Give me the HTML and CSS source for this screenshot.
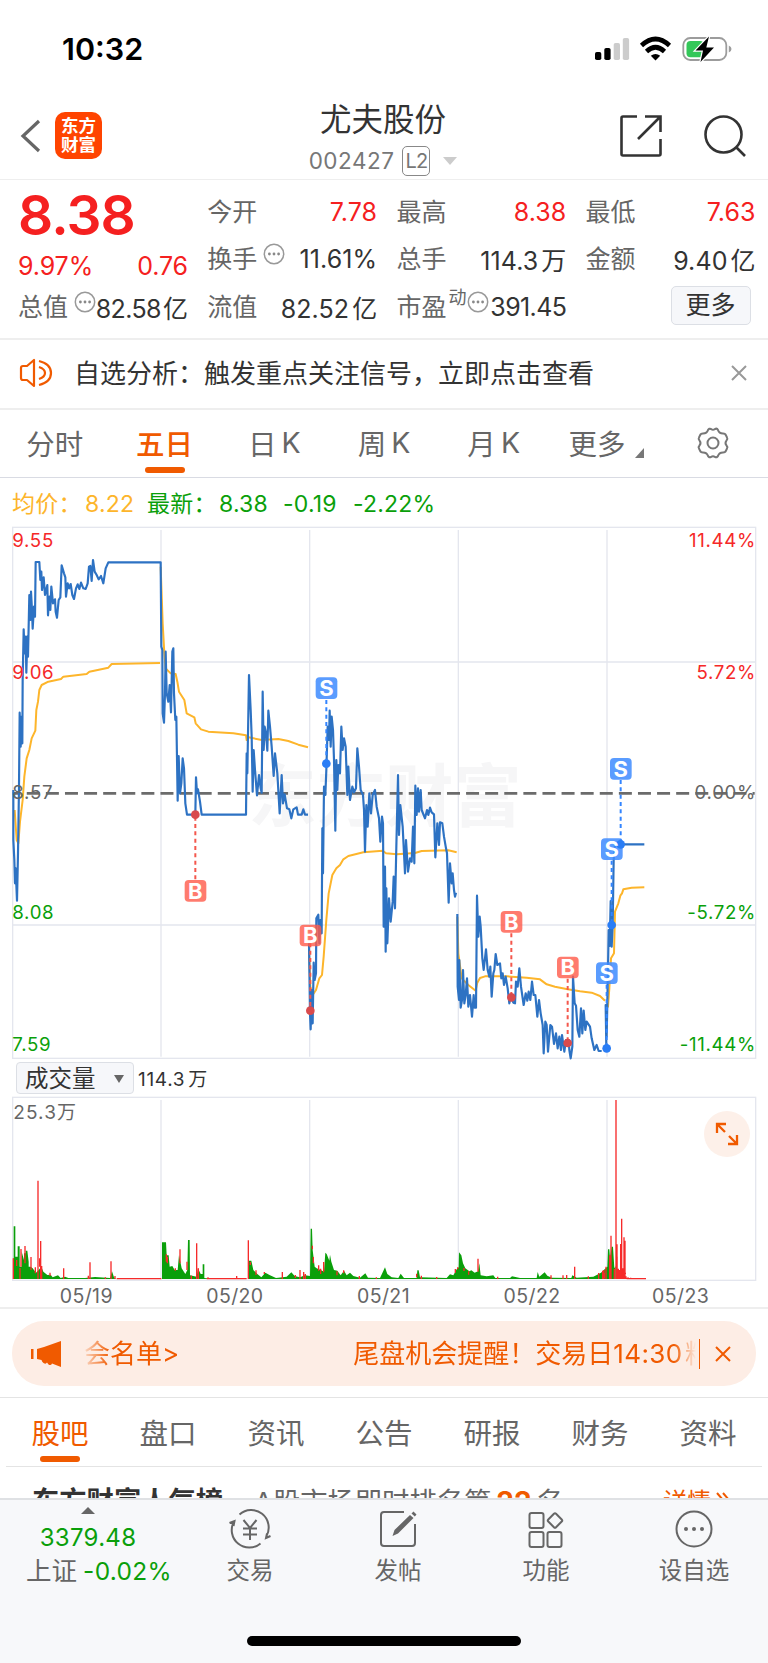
FILE: index.html
```html
<!DOCTYPE html>
<html lang="zh-CN">
<head>
<meta charset="utf-8">
<title>尤夫股份 002427</title>
<link rel="stylesheet" href="styles.css">
</head>
<body>
<div class="phone">
  <div class="status">
    <span class="clock">10:32</span>
    <svg class="status-icons" width="140" height="28" viewBox="594 35 140 28">
      <g fill="#000"><rect x="595" y="52" width="6.300" height="8" rx="1.800"/><rect x="604.300" y="48" width="6.300" height="12" rx="1.800"/></g>
      <g fill="#ccc"><rect x="613.700" y="43" width="6.300" height="17" rx="1.800"/><rect x="622.800" y="38" width="6.300" height="22" rx="1.800"/></g>
      <g fill="none" stroke="#000" stroke-width="4.600"><path d="M641.500 45.500Q655.500 32.500 669.500 45.500"/><path d="M646.500 51.500Q655.500 43 664.500 51.500"/></g>
      <path d="M650.800 55.800Q655.500 52 660.200 55.800L655.500 60.500Z"/>
      <rect x="683.300" y="38" width="43" height="22" rx="7" fill="none" stroke="#9c9c9c" stroke-width="1.800"/>
      <rect x="686.500" y="41" width="17.500" height="16.300" rx="4" fill="#34c759"/>
      <path d="M728.800 45.500Q731.500 46.500 731.500 49T728.800 52.500Z" fill="#9c9c9c"/>
      <path d="M709 36.500 695.500 50.600H703L700.500 62 714 47.500H706.300Z" stroke="#fff" stroke-width="2.400" paint-order="stroke"/>
    </svg>
  </div>

  <header class="header">
    <svg class="back" width="24" height="38" viewBox="0 0 24 38"><path d="M21 4 5 19 21 34" fill="none" stroke="#666" stroke-width="3.200"/></svg>
    <div class="logo"><span>东方</span><span>财富</span></div>
    <div class="title">
      <h1>尤夫股份</h1>
      <div class="code"><span>002427</span><b>L2</b><i></i></div>
    </div>
    <svg class="share" width="44" height="44" viewBox="0 0 44 44"><path d="M18 2.500H4Q2.500 2.500 2.500 4V40Q2.500 41.500 4 41.500H40Q41.500 41.500 41.500 40V25M26 2.500H41.500V18M41 3 19 25" fill="none" stroke="#333" stroke-width="2.600"/></svg>
    <svg class="search" width="44" height="44" viewBox="0 0 44 44"><g fill="none" stroke="#333" stroke-width="2.600"><circle cx="20.500" cy="20.500" r="18"/><path d="M33 33 42 42"/></g></svg>
  </header>

  <section class="quote">
    <div class="col">
      <div class="price">8.38</div>
      <div class="change"><span>9.97%</span><span>0.76</span></div>
      <div class="cell"><label>总值</label><svg class="tip" viewBox="0 0 22 22"><use href="#tip"/></svg><em class="tight">82.58<u>亿</u></em></div>
    </div>
    <div class="col">
      <div class="cell"><label>今开</label><em class="red">7.78</em></div>
      <div class="cell"><label>换手</label><svg class="tip" viewBox="0 0 22 22"><use href="#tip"/></svg><em>11.61%</em></div>
      <div class="cell"><label>流值</label><em>82.52<u>亿</u></em></div>
    </div>
    <div class="col">
      <div class="cell"><label>最高</label><em class="red">8.38</em></div>
      <div class="cell"><label>总手</label><em>114.3<u>万</u></em></div>
      <div class="cell"><label>市盈</label><sup>动</sup><svg class="tip near" viewBox="0 0 22 22"><g id="tip"><circle cx="11" cy="11" r="9.700" fill="none" stroke="#999" stroke-width="1.500"/><g fill="#888"><circle cx="6.400" cy="11" r="1.400"/><circle cx="11" cy="11" r="1.400"/><circle cx="15.600" cy="11" r="1.400"/></g></g></svg><em class="tight">391.45</em></div>
    </div>
    <div class="col">
      <div class="cell"><label>最低</label><em class="red">7.63</em></div>
      <div class="cell"><label>金额</label><em>9.40<u>亿</u></em></div>
      <div class="cell more"><button>更多</button></div>
    </div>
  </section>

  <section class="notice">
    <svg width="34" height="30" viewBox="0 0 34 30"><g fill="none" stroke="#f05a00" stroke-width="2.200"><path d="M15 2V28L8 22H4Q2 22 2 20V10Q2 8 4 8H8Z" stroke-linejoin="round"/><path d="M20 3Q32 6 32 15T20 27M20 9Q26 11 26 15T20 21"/></g></svg>
    <span>自选分析：触发重点关注信号，立即点击查看</span>
    <svg class="close" width="18" height="18" viewBox="0 0 18 18"><path d="M2 2 16 16M16 2 2 16" stroke="#999" stroke-width="2"/></svg>
  </section>

  <nav class="periods">
    <a>分时</a><a class="on">五日</a><a>日<s>K</s></a><a>周<s>K</s></a><a>月<s>K</s></a>
    <a class="drop">更多<svg width="9" height="10" viewBox="0 0 9 10"><path d="M9 0V10H0Z" fill="#777"/></svg></a>
    <a><svg width="34" height="34" viewBox="0 0 34 34"><g fill="none" stroke="#777" stroke-width="2"><path d="M12 4Q13 2 15 3Q17 4.500 19 3Q21 2 22 4Q23 7.500 27 7.500Q29.500 7.500 30 9.500L31 11.500Q32 13 30.500 14.500Q28.500 17 30.500 19.500Q32 21 31 22.500L30 24.500Q29.500 26.500 27 26.500Q23 26.500 22 30Q21 32 19 31Q17 29.500 15 31Q13 32 12 30Q11 26.500 7 26.500Q4.500 26.500 4 24.500L3 22.500Q2 21 3.500 19.500Q5.500 17 3.500 14.500Q2 13 3 11.500L4 9.500Q4.500 7.500 7 7.500Q11 7.500 12 4Z"/><circle cx="17" cy="17" r="5.500"/></g></svg></a>
  </nav>

  <div class="legend"><span class="avg">均价：</span><span class="avg">8.22</span><span>最新：</span><span>8.38</span><span>-0.19</span><span>-2.22%</span></div>

  <svg class="chart" width="768" height="540" viewBox="0 0 2304 1620">
    <text class="watermark" x="745" y="903" textLength="820">东方财富</text>
    <g class="grid"><path d="M38 426H2267M38 1215H2267M483 30V1610M929 30V1610M1375 30V1610M1821 30V1610"/><rect x="38" y="22" width="2229" height="1593"/></g>
    <path d="M38 820H2264" fill="none" stroke="#6b6b6b" stroke-width="8" stroke-dasharray="39 18.300" stroke-dashoffset="15"/>
    <g class="average">
      <path d="M44 870 50 960 55 970 60 905 68 840 73 770 80 715 88 690 95 655 106 632 109 570 114 545 118 510 125 495 145 485 183 477 190 470 260 462 268 455 325 443 335 432 480 429"/>
      <path d="M482 140 488 310 493 400 497 445 512 460 527 462 532 485 537 515 553 540 560 580 583 592 587 610 603 628 625 635 700 640 738 646 740 660 746 652 785 660 835 657 865 663 895 674 924 682"/>
      <path transform="translate(720 420)" d="M207 870 211 980 218 1005 228 990 238 955 246 945 251 890 259 780 266 700 277 645 289 625 300 615 310 598 325 588 370 577 428 572 438 580 470 583 525 579 545 573 625 571 650 577"/>
      <path transform="translate(1320 660)" d="M52 530 55 640 65 715 85 735 107 752 112 728 120 714 135 709 200 709 260 713 300 718 320 733 345 740 383 748 420 754 455 758 480 768 495 782M500 800 504 800 508 745 513 655 522 640 525 515 535 490 541 467 546 460 550 448 575 443 613 442"/>
    </g>
    <g class="line">
      <path d="M40 810V960L43 1020 45 1090 47 1045 51 1142 54 1000 57 800 59 578 62 680 65 590 67 670 68 480 71 328 74 400 77 350 79 458 82 350 84 410 88 225 91 300 93 215 96 270 98 326 102 260 105 290 107 126 118 126 121 180 124 155 126 210 131 172 135 225 142 195 144 286 148 230 151 270 154 200 159 250 165 238 167 275 171 293 176 240 181 232 185 136 192 160 196 172 198 230 203 190 207 205 212 192 217 225 222 237 228 205 233 193 238 207 243 188 250 205 257 207 263 190 267 140 271 138 275 183 279 120 284 155 290 165 296 178 303 168 310 190 317 145 325 127 332 127 482 127 484 380 487 390 488 580 492 608 495 520 497 395 500 520 505 545 509 495 513 577 517 395 520 385 522 520 526 600 529 590 533 842 536 708 540 820 544 790 548 715 552 745 556 850 561 884 586 884 588 772 591 820 594 808 600 845 605 884 738 884 740 700 742 760 747 465 752 570 755 650 758 815 761 690 765 750 771 826 777 765 782 805 785 818 788 515 791 690 794 620 798 640 802 692 805 572 810 620 815 680 821 768 825 700 832 760 839 880 845 765 849 850 854 823 861 865 868 868 874 895 880 868 890 862 894 884 905 884 910 868 915 884 924 884"/>
      <path transform="translate(720 420)" d="M207 850 210 1060 212 1108 215 990 218 1090 221 908 224 960 228 940 229 775 235 764 238 850 241 780 245 820 247 505 249 640 252 380 256 405 259 330 263 200 267 240 269 152 272 260 275 170 279 210 282 300 286 512 289 300 292 390 295 315 300 340 304 200 308 270 312 235 317 260 322 405 325 320 330 420 337 380 342 397 348 385 352 265 357 320 362 390 369 405 372 450 375 575 379 435 383 500 388 400 393 460 398 405 405 390 410 440 417 475 421 545 426 470 429 490 431 800 435 620 437 875 439 685 442 850 447 715 452 785 458 725 461 650 465 745 469 560 474 345 477 525 481 435 488 500 495 640 498 540 504 635 510 595 515 605 519 500 523 610 526 377 530 465 534 385 537 455 542 390 545 450 555 475 561 450 565 465 570 443 575 457 582 463 586 592 592 490 597 555 600 487 607 490 612 530 618 565 621 580 626 728 630 610 635 670 638 640 642 690 645 710 648 698"/>
      <path transform="translate(1320 660)" d="M52 522 53 740 57 780 58 660 62 803 66 780 69 690 73 790 77 765 81 715 85 800 90 765 96 830 101 765 104 803 108 803 111 467 115 590 119 530 122 560 127 655 131 690 138 628 143 690 148 710 151 680 155 770 160 700 163 690 167 642 172 675 180 670 184 715 188 700 192 735 197 710 203 745 208 790 212 770 220 788 225 790 228 725 233 740 238 685 243 740 251 795 257 760 262 782 266 755 271 780 276 725 281 765 286 765 292 830 297 780 302 820 308 855 311 940 316 845 320 855 324 935 331 855 336 860 342 912 348 880 353 925 358 890 363 930 366 885 373 935 378 900 386 900 388 930 392 955 397 920 399 710 404 790 408 797 413 870 418 890 423 805 427 880 431 812 436 870 440 845 450 860 455 895 463 930 470 915 476 933 485 933M499 925 497 795 500 890 503 740 506 570 509 618 512 483 515 620 518 555 521 360 525 313 613 313"/>
    </g>
    <g class="axis">
      <g fill="#f52828"><text x="37" y="81">9.55</text><text x="37" y="478">9.06</text><text class="end" x="2268" y="81">11.44%</text><text class="end" x="2268" y="478">5.72%</text></g>
      <g fill="#666"><text x="37" y="838">8.57</text><text class="end" x="2268" y="838">0.00%</text></g>
      <g fill="#0a9f0a"><text x="37" y="1196">8.08</text><text x="37" y="1594">7.59</text><text class="end" x="2268" y="1196">-5.72%</text><text class="end" x="2268" y="1594">-11.44%</text></g>
    </g>
    <g class="mark buy">
      <path d="M586 1078V884M931 1270V1472M1534 1240V1432M1703 1376V1569"/>
      <g><rect x="554" y="1080" width="65" height="65" rx="12"/><rect x="899" y="1214" width="65" height="65" rx="12"/><rect x="1502" y="1173" width="65" height="65" rx="12"/><rect x="1671" y="1310" width="65" height="65" rx="12"/></g>
      <g class="dots"><circle cx="586" cy="884" r="13"/><circle cx="931" cy="1472" r="13"/><circle cx="1534" cy="1432" r="13"/><circle cx="1703" cy="1569" r="13"/></g>
      <text x="586" y="1136">B</text><text x="931" y="1270">B</text><text x="1534" y="1229">B</text><text x="1703" y="1366">B</text>
    </g>
    <g class="mark sell">
      <path d="M979 540V731M1862 780V973M1835 1022V1215M1820 1394V1585"/>
      <g><rect x="947" y="472" width="65" height="65" rx="12"/><rect x="1830" y="714" width="65" height="65" rx="12"/><rect x="1803" y="955" width="65" height="65" rx="12"/><rect x="1788" y="1327" width="65" height="65" rx="12"/></g>
      <g class="dots"><circle cx="979" cy="731" r="13"/><circle cx="1862" cy="973" r="13"/><circle cx="1835" cy="1215" r="13"/><circle cx="1820" cy="1585" r="13"/></g>
      <text x="979" y="528">S</text><text x="1862" y="770">S</text><text x="1835" y="1011">S</text><text x="1820" y="1383">S</text>
    </g>
  </svg>

  <div class="volume-head"><button>成交量<i></i></button><span>114.3<u>万</u></span></div>

  <div class="volume">
    <svg width="768" height="186" viewBox="0 138 2304 558">
      <g class="grid"><path d="M483 150V688M929 150V688M1375 150V688M1821 150V688"/><rect x="38" y="142" width="2229" height="549"/></g>
      <path class="down" d="M40 687V625H41V529H46V620H53V589H59V650H65V605L72 630V610H77V602H82L86 635V650H92L98 655 108 668 116 660 124 650 130 665 142 675 152 674 158 682 174 676 182 684 195 680 205 684H255L285 681 330 684 336 664 342 682 348 687ZM486 687V577H498L500 616H506L509 650 517 648 524 660 533 660 537 615 545 655 556 672 562 660 564 570H569L570 676 590 680 594 655 602 672H608V643H613V684L640 687ZM744 687 747 632H754L760 660 772 672 784 682 796 668 810 676 828 684 860 680 874 667 884 678 900 682 915 676 930 678 932 536H936L938 600 944 650 950 655 962 660 972 665 976 608 980 612 988 632 990 614 994 635 1002 660 1012 662 1022 676 1032 662 1040 676 1050 668 1060 678 1080 683 1096 670 1104 683 1140 684 1155 652 1162 672 1175 682 1195 684 1202 671 1212 684 1250 684 1252 661H1256L1260 682 1340 684 1350 673 1360 676 1370 658 1376 652 1377 607 1384 616 1389 640 1396 655 1408 664 1414 661 1424 668 1434 664 1438 640 1442 676 1460 679 1480 676 1486 684 1530 684 1536 679 1560 684 1610 684 1613 666 1618 680 1634 667 1642 677 1655 683 1714 684 1717 676 1730 683 1780 680 1790 675 1803 668 1822 650 1824 598H1828L1830 625 1835 590H1839L1843 655 1847 648V687Z"/>
      <path class="up" d="M40 687V625M50 648V630M60 687V654M63 650V597M75 640V588M93 660V621M106 670V652M114 687V392M119 650V625M122 687V573M125 687V648M150 678V668M191 687V655M270 687V637M265 687V677M333 687V634M345 687V678M316 687V682M499 635V613M502 640V620M526 662V655M540 640V598M561 660V635M590 687V580M595 687V655M574 687V677M624 687V682M710 687V678M692 687V684M745 687V571M751 645V636M768 675V661M793 672V666M847 687V666M886 684V675M900 687V660M911 687V666M916 687V672M937 598V587M940 640V621M956 662V646M962 672V656M971 667V636M1011 676V664M1031 670V661M1078 687V678M1129 687V682M1250 682V671M1264 687V677M1310 687V681M1366 668V657M1373 658V652M1392 663V654M1434 665V626M1406 674V664M1493 687V680M1653 687V676M1689 687V676M1700 687V675M1724 687V650M1765 687V679M1796 687V669M1808 687V662M1812 687V660M1818 687V650M1829 687V616M1833 687V557M1843 687V656M1848 687V150M1851 687V583M1855 687V656M1859 687V660M1862 687V582M1865 687V506M1869 687V655M1872 687V562M1875 687V572M1878 687V679M1884 687V682M1892 687V683M350 686H484M620 686H740M1854 670H1878M1880 686H1938"/>
      <path class="up" d="M1808 685V672M1813 685V669M1850 685V620"/>
      <text x="40" y="207" textLength="188">25.3万</text>
    </svg>
    <button class="expand"><svg width="24" height="24" viewBox="0 0 24 24"><g fill="none" stroke="#f05a00" stroke-width="2.300"><path d="M11 2H2V11M2 2 10 10M22 13V22H13M22 22 14 14"/></g></svg></button>
  </div>
  <div class="dates"><span>05/19</span><span>05/20</span><span>05/21</span><span>05/22</span><span>05/23</span></div>

  <section class="promo">
    <div class="banner">
      <svg width="32" height="28" viewBox="0 0 32 28" fill="#f05a00"><path d="M0 9H2.500V19H0ZM6 9 13 7 30 1V27L21 23.500Q20 26 17.500 24.500L16 22.500Q15 24.500 12.500 23Q11 22 10.500 20L6 19Z"/></svg>
      <div class="ticker"><div class="track"><span>会名单&gt;</span><span class="next">尾盘机会提醒！交易日<s>14:30</s>&#8202;料</span></div></div>
      <svg class="dismiss" width="18" height="18" viewBox="0 0 18 18"><path d="M2 2 16 16M16 2 2 16" stroke="#f05a00" stroke-width="2"/></svg>
    </div>
  </section>

  <nav class="topics"><a class="on">股吧</a><a>盘口</a><a>资讯</a><a>公告</a><a>研报</a><a>财务</a><a>资料</a></nav>
  <div class="rank"><b>东方财富人气榜</b><span>A股市场即时排名第<strong>22</strong>名</span><a>详情<svg width="16" height="16" viewBox="0 0 16 16"><path d="M2 1 8 8 2 15M8 1 14 8 8 15" fill="none" stroke="#f05a00" stroke-width="2"/></svg></a></div>

  <footer class="dock">
    <div class="index"><i></i><span>3379.48</span><p>上证<span>-0.02%</span></p></div>
    <a><svg width="44" height="40" viewBox="0 0 44 40"><g fill="none" stroke="#666" stroke-width="2"><path d="M11.500 5.500A17.500 17.500 0 0 1 38.500 27M32.500 34.500A17.500 17.500 0 0 1 6 12.500M1.500 14 6.500 12 5.500 17M42.500 27 38 29 39 24.500"/><path d="M15.500 11 22 19 28.500 11M15 19.500H29M15 25.500H29M22 19V31"/></g></svg>交易</a>
    <a><svg width="44" height="40" viewBox="0 0 44 40"><path d="M28 3H8Q5 3 5 6V34Q5 37 8 37H36Q39 37 39 34V15" fill="none" stroke="#666" stroke-width="2"/><path d="M34 6 37.500 9 22 24.500 16.500 27 18.500 21ZM35.500 4.500 37.500 2.500 40.500 5.500 38.800 7.500Z" fill="#666"/></svg>发帖</a>
    <a><svg width="44" height="40" viewBox="0 0 44 40"><g fill="none" stroke="#666" stroke-width="2"><rect x="5.500" y="4" width="14" height="15" rx="2"/><rect x="5.500" y="23" width="14" height="15" rx="2"/><rect x="23.500" y="23" width="14" height="15" rx="2"/><rect x="25.500" y="6" width="11" height="11" rx="1.500" transform="rotate(45 31 11.500)"/></g></svg>功能</a>
    <a><svg width="44" height="40" viewBox="0 0 44 40"><circle cx="22" cy="20" r="17.500" fill="none" stroke="#666" stroke-width="2"/><g fill="#666"><circle cx="14" cy="20" r="2"/><circle cx="22" cy="20" r="2"/><circle cx="30" cy="20" r="2"/></g></svg>设自选</a>
    <div class="home"></div>
  </footer>
</div>
</body>
</html>
```
FILE: styles.css
```css
* { box-sizing: border-box; margin: 0; padding: 0; }
body { background: #fff; font-family: Inter, "Noto Sans CJK SC", sans-serif; color: #333; }
i, em { font-style: normal; }
s, u { text-decoration: none; }
svg { display: block; flex: none; }
button { font: inherit; color: inherit; border: 0; }
.phone { width: 768px; height: 1663px; overflow: hidden; display: flex; flex-direction: column; }
.phone > * { flex: none; }

.status { height: 96px; padding: 2px 34px 0 62px; display: flex; align-items: center; justify-content: space-between; }
.clock { font-size: 30.500px; font-weight: 600; color: #000; letter-spacing: 0; margin-top: -2px; }

.header { height: 84px; border-bottom: 1.500px solid #eee; display: flex; align-items: center; padding: 0 21px 4px 18px; }
.logo { width: 47px; height: 47px; margin-left: 13px; border-radius: 10px; background: #ff4400; color: #fff; font-size: 17.500px; font-weight: 700; line-height: 19px; display: flex; flex-direction: column; align-items: center; padding-top: 4px; }
.title { flex: 1; display: flex; flex-direction: column; align-items: center; padding: 5px 0 0 45px; }
.title h1 { font-size: 31.500px; font-weight: 400; line-height: 42px; margin-bottom: 3px; }
.code { display: flex; align-items: center; height: 34px; color: #777; font-size: 22.500px; letter-spacing: .5px; }
.code b { font-weight: 400; font-size: 20px; letter-spacing: -1px; width: 28px; height: 30px; line-height: 28px; border: 1.500px solid #888; border-radius: 5px; text-align: center; margin-left: 8px; }
.code i { border: 7px solid transparent; border-top: 8px solid #ccc; border-bottom: 0; margin-left: 13px; }
.share { margin-right: 40px; }

.quote { height: 160px; border-bottom: 2px solid #eee; padding: 8px 12px 0 18px; display: grid; grid-template-columns: repeat(4, 170px); column-gap: 19.200px; }
.price { height: 54px; line-height: 54px; font-size: 55px; font-weight: 600; color: #f52020; letter-spacing: -.9px; }
.change { height: 41px; line-height: 49px; display: flex; justify-content: space-between; font-size: 25px; color: #f52020; letter-spacing: -.1px; }
.cell { height: 47.500px; display: flex; align-items: center; font-size: 25px; }
.cell label { color: #666; line-height: 36px; white-space: nowrap; flex: none; }
.cell em { margin-left: auto; letter-spacing: .1px; white-space: nowrap; }
.cell u { margin-left: 3px; letter-spacing: 0; }
.cell .red { color: #f52020; }
.cell sup { font-size: 18px; color: #666; align-self: flex-start; margin: 3px 0 0 2px; line-height: 24px; }
.tip { width: 22px; height: 22px; margin: -10px 0 0 6px; }
.tip + em { margin-left: -6px; flex: 1; text-align: right; }
.cell .tight { letter-spacing: -.6px; }
.cell .tight u { margin-left: 2px; }
.tip.near { margin-left: 1px; }
.more { justify-content: flex-end; padding-right: 5px; }
.more button { width: 80px; height: 39px; margin-top: -3px; background: #f6f7fa; border: 1.500px solid #dcdfe5; border-radius: 5px; line-height: 34px; }

.notice { height: 70px; border-bottom: 2px solid #eee; display: flex; align-items: center; padding: 0 20px 2px 19px; font-size: 26px; }
.notice span { margin: -3px 0 0 21px; flex: 1; white-space: nowrap; }

.periods, .topics { display: grid; grid-template-columns: repeat(7, 1fr); font-size: 28.500px; color: #666; }
.periods { height: 68px; border-bottom: 1.500px solid #d9dbe3; }
.periods a, .topics a { position: relative; display: flex; align-items: center; justify-content: center; padding-bottom: 2px; }
.periods s { margin-left: 5px; }
.periods .on { color: #f05a00; font-weight: 500; }
.topics .on { color: #f05a00; }
.on::after { content: ""; position: absolute; bottom: 4px; left: 50%; width: 40px; height: 6px; margin-left: -20px; border-radius: 3px; background: #f05a00; }
.drop svg { margin: 20px 0 0 10px; }
.periods .drop { padding-left: 6px; }

.legend { height: 42px; padding: 8px 0 0 12px; display: grid; grid-template-columns: 73px 62px 72px 64px 70px auto; font-size: 23px; line-height: 36px; color: #0a9f0a; letter-spacing: .2px; white-space: nowrap; }
.legend .avg { color: #fdb52b; }

.grid { fill: none; stroke: #e4e6ee; stroke-width: 4; }
.average, .line { fill: none; stroke-linejoin: round; }
.average { stroke: #fdb52b; stroke-width: 6; }
.line { stroke: #2d72c3; stroke-width: 6.500; }
.axis text { font-size: 56px; letter-spacing: 2px; }
.axis .end { text-anchor: end; }
.watermark { font-size: 205px; font-weight: 700; fill: #f6f6f7; }
.mark path { fill: none; stroke-width: 6; stroke-dasharray: 12 10; }
.mark text { font-size: 66px; font-weight: 700; fill: #fff; text-anchor: middle; }
.buy path { stroke: #f4574c; }
.buy rect { fill: #ff5a4a; fill-opacity: .8; }
.buy .dots { fill: #d94a4c; }
.sell path { stroke: #3385ff; }
.sell rect { fill: #3d8bff; fill-opacity: .85; }
.sell .dots { fill: #2a7df5; }

.volume-head { height: 36px; display: flex; align-items: center; padding: 0 0 0 16px; font-size: 19px; }
.volume-head button { width: 118px; height: 32px; background: #f6f7fa; border: 1.500px solid #dcdfe5; border-radius: 4px; font-size: 23.500px; line-height: 30px; display: flex; align-items: center; padding: 1px 0 0 8px; }
.volume-head i { border: 5px solid transparent; border-top: 8px solid #666; border-bottom: 0; margin-left: 18px; }
.volume-head span { margin: -2px 0 0 4px; letter-spacing: .7px; }
.volume-head u { margin-left: 3px; }

.volume { position: relative; }
.volume text { font-size: 57px; fill: #666; }
.down { fill: #0a9f0a; }
.up { fill: none; stroke: #f62a2a; stroke-width: 4; }
.expand { position: absolute; right: 18px; top: 15px; width: 46px; height: 46px; border-radius: 50%; background: #fdf0e9; display: flex; align-items: center; justify-content: center; }
.dates { height: 27px; border-bottom: 2px solid #eee; display: grid; grid-template-columns: repeat(5, 148.600px); padding-left: 12px; text-align: center; font-size: 19.500px; line-height: 28px; color: #666; letter-spacing: .4px; }

.promo { height: 89px; border-bottom: 1.500px solid #e4e4e4; padding: 12px 12px 0; }
.banner { height: 65px; border-radius: 32px; background: #fdede5; color: #f05a00; display: flex; align-items: center; padding: 0 24px 0 19px; }
.ticker { width: 620px; height: 30px; margin-left: 17px; border-right: 1.500px solid #f05a00; }
.track { height: 38px; line-height: 38px; margin-top: -4px; display: flex; font-size: 26px; white-space: nowrap; overflow: hidden; -webkit-mask: linear-gradient(90deg, transparent, #000 30px, #000 594px, transparent 616px); mask: linear-gradient(90deg, transparent, #000 30px, #000 594px, transparent 616px); }
.track span:first-child { margin-left: 4px; }
.track .next { margin-left: 174px; }
.track s { letter-spacing: .4px; }
.dismiss { margin-left: auto; }

.topics { height: 69px; margin: 0 6px; border-bottom: 1.500px solid #e4e4e4; }
.rank { height: 31px; overflow: hidden; display: flex; padding: 15px 37px 0 32px; font-size: 27.300px; line-height: 40px; white-space: nowrap; }
.rank span { margin-left: 31px; color: #666; }
.rank strong { color: #f05a00; margin: 0 5px; font-size: 28px; }
.rank a { margin-left: auto; color: #f05a00; font-size: 24px; display: flex; }
.rank a svg { margin: 10px 0 0 4px; }

.dock { height: 165px; background: #f7f8fa; border-top: 2px solid #dfe1e4; display: grid; grid-template-columns: 176px repeat(4, 148px); position: relative; color: #666; font-size: 23.500px; }
.dock a { display: flex; flex-direction: column; align-items: center; padding-top: 9px; line-height: 36px; gap: 4px; }
.index { display: flex; flex-direction: column; align-items: center; padding-top: 7px; font-size: 24px; }
.index i { border: 7px solid transparent; border-bottom: 7px solid #666; border-top: 0; }
.index span { color: #0a9f0a; line-height: 48px; letter-spacing: .3px; }
.index p { display: flex; font-size: 25.500px; line-height: 36px; margin-top: -9px; white-space: nowrap; padding-left: 22px; }
.index p span { font-size: 24.500px; line-height: 36px; margin-left: 6px; }
.home { position: absolute; left: 247px; bottom: 17px; width: 274px; height: 10px; border-radius: 5px; background: #000; }
```
